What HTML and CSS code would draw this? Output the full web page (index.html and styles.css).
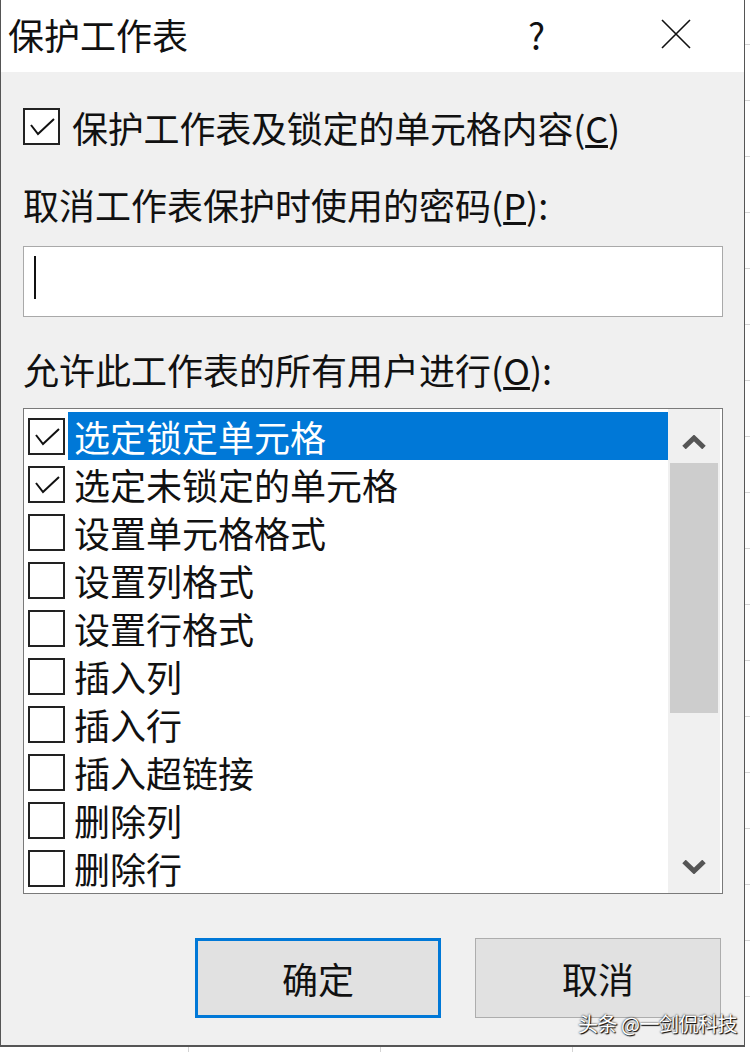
FILE: index.html
```html
<!DOCTYPE html>
<html lang="zh-CN">
<head>
    <meta charset="UTF-8">
    <meta name="viewport" content="width=device-width, initial-scale=1.0">
    <title>保护工作表</title>
    <link rel="stylesheet" href="styles.css">
</head>
<body>
    <div class="dialog">
        <div class="titlebar">
            <span class="title">保护工作表</span>
            <span class="help">?</span>
            <svg class="close" width="30" height="30" viewBox="0 0 30 30">
                <path d="M1 1 L29 29 M29 1 L1 29" stroke="#111" stroke-width="1.6" fill="none"/>
            </svg>
        </div>

        <div class="content">
            <div class="check-row">
                <span class="box checked">
                    <svg width="33" height="33" viewBox="0 0 33 33"><polyline points="6,15 13,24 29,9" fill="none" stroke="#111" stroke-width="2"/></svg>
                </span>
                <span class="label">保护工作表及锁定的单元格内容(<u>C</u>)</span>
            </div>

            <div class="field-label">取消工作表保护时使用的密码(<u>P</u>):</div>
            <div class="password"><span class="caret"></span></div>

            <div class="field-label second">允许此工作表的所有用户进行(<u>O</u>):</div>

            <div class="listbox">
                <div class="items">
                    <div class="item">
                        <span class="box checked"><svg width="33" height="33" viewBox="0 0 33 33"><polyline points="6,15 13,24 29,9" fill="none" stroke="#111" stroke-width="2"/></svg></span>
                        <span class="item-text selected">选定锁定单元格</span>
                    </div>
                    <div class="item">
                        <span class="box checked"><svg width="33" height="33" viewBox="0 0 33 33"><polyline points="6,15 13,24 29,9" fill="none" stroke="#111" stroke-width="2"/></svg></span>
                        <span class="item-text">选定未锁定的单元格</span>
                    </div>
                    <div class="item"><span class="box"></span><span class="item-text">设置单元格格式</span></div>
                    <div class="item"><span class="box"></span><span class="item-text">设置列格式</span></div>
                    <div class="item"><span class="box"></span><span class="item-text">设置行格式</span></div>
                    <div class="item"><span class="box"></span><span class="item-text">插入列</span></div>
                    <div class="item"><span class="box"></span><span class="item-text">插入行</span></div>
                    <div class="item"><span class="box"></span><span class="item-text">插入超链接</span></div>
                    <div class="item"><span class="box"></span><span class="item-text">删除列</span></div>
                    <div class="item"><span class="box"></span><span class="item-text">删除行</span></div>
                </div>
                <div class="scrollbar">
                    <div class="arrow up">
                        <svg width="24" height="14" viewBox="0 0 24 14"><polyline points="2,12.5 12,3 22,12.5" fill="none" stroke="#555" stroke-width="5"/></svg>
                    </div>
                    <div class="thumb"></div>
                    <div class="track"></div>
                    <div class="arrow down">
                        <svg width="24" height="14" viewBox="0 0 24 14"><polyline points="2,1.5 12,11 22,1.5" fill="none" stroke="#555" stroke-width="5"/></svg>
                    </div>
                </div>
            </div>

            <div class="buttons">
                <button class="btn default">确定</button>
                <button class="btn">取消</button>
            </div>
        </div>
    </div>

    <div class="watermark">头条 @一剑侃科技</div>
</body>
</html>
```

FILE: styles.css
```css
* { box-sizing: border-box; }
body {
    margin: 0;
    width: 750px;
    height: 1052px;
    position: relative;
    font-family: "Noto Sans CJK SC", "Noto Sans", sans-serif;
    color: #111;
    background-color: #fff;
    background-image:
        linear-gradient(to right, transparent 188px, #d4d4d4 188px, #d4d4d4 189px, transparent 189px, transparent 380px, #d4d4d4 380px, #d4d4d4 381px, transparent 381px, transparent 572px, #d4d4d4 572px, #d4d4d4 573px, transparent 573px),
        repeating-linear-gradient(to bottom, transparent 0, transparent 44px, #d4d4d4 44px, #d4d4d4 45px, transparent 45px, transparent 56px);
    overflow: hidden;
}

.dialog {
    width: 745px;
    height: 1047px;
    background: #f0f0f0;
    border-left: 1px solid #555;
    border-right: 1px solid #555;
    border-bottom: 2px solid #555;
    display: flex;
    flex-direction: column;
}

.titlebar {
    height: 72px;
    background: #fff;
    display: flex;
    align-items: center;
    padding: 0 0 4px 7px;
    flex-shrink: 0;
}
.title { font-size: 36px; line-height: 44px; }
.help { font-size: 36px; line-height: 44px; margin-left: auto; width: 22px; }
.close { margin-left: 111px; margin-right: 53px; }

.content {
    padding: 0 21px 0 22px;
    display: flex;
    flex-direction: column;
}

.check-row {
    margin-top: 36px;
    height: 37px;
    display: flex;
    align-items: center;
}
.label { font-size: 36px; line-height: 44px; margin-left: 12px; letter-spacing: -0.2px; }

.box {
    width: 37px;
    height: 37px;
    border: 2px solid #222;
    background: #fff;
    flex-shrink: 0;
    display: flex;
}

.field-label { font-size: 36px; line-height: 44px; margin-top: 37px; }
.field-label.second { margin-top: 30px; }

.password {
    margin-top: 20px;
    height: 71px;
    background: #fff;
    border: 1px solid #a9a9a9;
    padding: 9px 0 0 10px;
}
.caret { display: block; width: 2px; height: 43px; background: #111; }

.listbox {
    margin-top: 17px;
    height: 486px;
    background: #fff;
    border: 1px solid #7a7a7a;
    display: flex;
    padding: 3px 2px 0 0;
}
.items { flex: 1; }
.item { height: 48px; display: flex; align-items: center; padding-left: 4px; }
.item-text {
    flex: 1;
    margin-left: 3px;
    height: 48px;
    line-height: 48px;
    font-size: 36px;
    padding-left: 6px;
}
.item-text.selected { background: #0078d7; color: #fff; }

.scrollbar {
    width: 52px;
    margin-top: -3px;
    background: #f0f0f0;
    display: flex;
    flex-direction: column;
}
.arrow { display: flex; justify-content: center; }
.arrow.up { height: 54px; align-items: flex-end; padding-bottom: 14px; }
.arrow.down { height: 52px; align-items: center; }
.thumb { height: 250px; margin: 0 2px; background: #cdcdcd; }
.track { flex: 1; }

.buttons {
    margin-top: 44px;
    margin-right: 2px;
    display: flex;
    justify-content: flex-end;
    gap: 34px;
}
.btn {
    width: 246px;
    height: 80px;
    background: #e1e1e1;
    border: 1px solid #adadad;
    font-family: inherit;
    font-size: 36px;
    color: #111;
    padding: 0;
}
.btn.default { border: 3px solid #0078d7; }

.watermark {
    position: absolute;
    left: 578px;
    top: 1010px;
    font-size: 20px;
    line-height: 28px;
    color: #fff;
    text-shadow: 0 0 2px #000, 1px 1px 1px #000;
    letter-spacing: -0.5px;
}
```
